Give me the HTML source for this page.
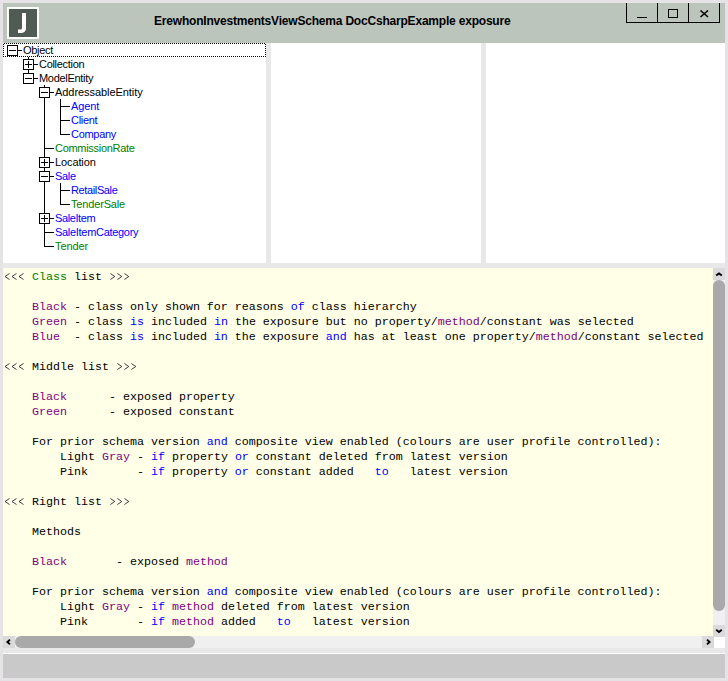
<!DOCTYPE html>
<html><head><meta charset="utf-8">
<style>
*{margin:0;padding:0;box-sizing:border-box}
html,body{width:728px;height:681px;overflow:hidden;background:#e5e3e5}
.a{position:absolute}
#title{left:3px;top:3px;width:722px;height:40px;background:#bcc5bc}
#icon{left:7px;top:7px;width:32px;height:32px;border:2px solid #fff;background:#505b53}
#ttext{left:154px;top:13px;font:bold 12px "Liberation Sans",sans-serif;letter-spacing:-0.2px;color:#000;white-space:nowrap;line-height:16px}
.panel{background:#fff;top:43px;height:220px}
#text{left:3px;top:268px;width:710px;height:368px;background:#ffffe8;overflow:hidden}
pre{position:absolute;left:1px;top:2px;font:11.67px "Liberation Mono",monospace;letter-spacing:0px;line-height:15px;color:#000}
.ab{display:inline-block;width:7px;text-align:center;font-family:"Liberation Serif",serif;font-size:13px;line-height:10px}
.p{color:#800080}.g{color:#008000}.b{color:#0000ff}
#vs{left:713px;top:268px;width:12px;height:368px;background:#f0f0f0}
#hs{left:3px;top:636px;width:710px;height:12px;background:#f0f0f0}
#corner{left:714px;top:637px;width:11px;height:11px;background:#fff}
#status{left:3px;top:654px;width:722px;height:24px;background:#c9c9c9}
#sline{left:3px;top:653px;width:722px;height:1px;background:#fff}
.tr{position:absolute;font:11px "Liberation Sans",sans-serif;letter-spacing:-0.3px;line-height:14px;height:14px;white-space:nowrap;color:#000}
</style></head><body>
<div class="a" style="left:3px;top:43px;width:722px;height:610px;background:#e8e8e8"></div>
<div id="title" class="a"></div>
<div id="icon" class="a"></div>
<svg class="a" style="left:0;top:0" width="48" height="45">
<path d="M22 13H26V28C26 31.5 24 33 20.5 33H18V29.5H20C21.5 29.5 22 29 22 27.5Z" fill="#fff"/>
</svg>
<div id="ttext" class="a">ErewhonInvestmentsViewSchema DocCsharpExample exposure</div>
<svg class="a" style="left:0;top:0" width="728" height="43" shape-rendering="crispEdges">
<path d="M626.5 3V22.5H719.5V3M657.5 3V22M688.5 3V22M637 17.5H647" stroke="#000" fill="none"/>
<rect x="668.5" y="9.5" width="9" height="8" stroke="#000" fill="none"/>
</svg>
<svg class="a" style="left:0;top:0" width="728" height="43">
<path d="M700.5 10.5L708 17M708 10.5L700.5 17" stroke="#000" stroke-width="1.65" fill="none"/>
</svg>

<div class="a panel" style="left:3px;width:263px"></div>
<div class="a panel" style="left:271px;width:210px"></div>
<div class="a panel" style="left:486px;width:239px"></div>

<!--TREE--><svg class="a" style="left:0;top:0" width="266" height="263" shape-rendering="crispEdges"><path d="M28.5 57V79M44.5 85V247M60.5 99V135M60.5 183V205M12 50.5H22M28 64.5H38M28 78.5H38M44 92.5H54M60 106.5H70M60 120.5H70M60 134.5H70M44 148.5H54M44 162.5H54M44 176.5H54M60 190.5H70M60 204.5H70M44 218.5H54M44 232.5H54M44 246.5H54" stroke="#000" fill="none"/><rect x="7.5" y="45.5" width="10" height="10" fill="#fff" stroke="#000"/><path d="M9 50.5H16" stroke="#000"/><rect x="23.5" y="59.5" width="10" height="10" fill="#fff" stroke="#000"/><path d="M25 64.5H32M28.5 61V68" stroke="#000"/><rect x="23.5" y="73.5" width="10" height="10" fill="#fff" stroke="#000"/><path d="M25 78.5H32" stroke="#000"/><rect x="39.5" y="87.5" width="10" height="10" fill="#fff" stroke="#000"/><path d="M41 92.5H48" stroke="#000"/><rect x="39.5" y="157.5" width="10" height="10" fill="#fff" stroke="#000"/><path d="M41 162.5H48M44.5 159V166" stroke="#000"/><rect x="39.5" y="171.5" width="10" height="10" fill="#fff" stroke="#000"/><path d="M41 176.5H48" stroke="#000"/><rect x="39.5" y="213.5" width="10" height="10" fill="#fff" stroke="#000"/><path d="M41 218.5H48M44.5 215V222" stroke="#000"/></svg>
<div class="tr" style="left:23px;top:43px;color:#000">Object</div>
<div class="tr" style="left:39px;top:57px;color:#000">Collection</div>
<div class="tr" style="left:39px;top:71px;color:#000">ModelEntity</div>
<div class="tr" style="left:55px;top:85px;color:#000;letter-spacing:-0.06px">AddressableEntity</div>
<div class="tr" style="left:71px;top:99px;color:#0000ff;letter-spacing:-0.1px">Agent</div>
<div class="tr" style="left:71px;top:113px;color:#0000ff">Client</div>
<div class="tr" style="left:71px;top:127px;color:#0000ff">Company</div>
<div class="tr" style="left:55px;top:141px;color:#008000">CommissionRate</div>
<div class="tr" style="left:55px;top:155px;color:#000;letter-spacing:-0.11px">Location</div>
<div class="tr" style="left:55px;top:169px;color:#0000ff">Sale</div>
<div class="tr" style="left:71px;top:183px;color:#0000ff;letter-spacing:-0.37px">RetailSale</div>
<div class="tr" style="left:71px;top:197px;color:#008000;letter-spacing:-0.16px">TenderSale</div>
<div class="tr" style="left:55px;top:211px;color:#0000ff;letter-spacing:-0.39px">SaleItem</div>
<div class="tr" style="left:55px;top:225px;color:#0000ff">SaleItemCategory</div>
<div class="tr" style="left:55px;top:239px;color:#008000;letter-spacing:-0.07px">Tender</div>
<svg class="a" style="left:0;top:0" width="270" height="60" shape-rendering="crispEdges"><path d="M4 43.5H266M3.5 44V57M3 56.5H266M265.5 44V57" stroke="#000" stroke-dasharray="1 1" fill="none"/></svg>
<!--/TREE-->
<div id="text" class="a"><pre>    <span class="g">Class</span> list    

    <span class="p">Black</span> - class only shown for reasons <span class="b">of</span> class hierarchy
    <span class="p">Green</span> - class <span class="b">is</span> included <span class="b">in</span> the exposure but no property/<span class="p">method</span>/constant was selected
    <span class="p">Blue</span>  - class <span class="b">is</span> included <span class="b">in</span> the exposure <span class="b">and</span> has at least one property/<span class="p">method</span>/constant selected

    Middle list    

    <span class="p">Black</span>      - exposed property
    <span class="p">Green</span>      - exposed constant

    For prior schema version <span class="b">and</span> composite view enabled (colours are user profile controlled):
        Light <span class="p">Gray</span> - <span class="b">if</span> property <span class="b">or</span> constant deleted from latest version
        Pink       - <span class="b">if</span> property <span class="b">or</span> constant added   <span class="b">to</span>   latest version

    Right list    

    Methods

    <span class="p">Black</span>       - exposed <span class="p">method</span>

    For prior schema version <span class="b">and</span> composite view enabled (colours are user profile controlled):
        Light <span class="p">Gray</span> - <span class="b">if</span> <span class="p">method</span> deleted from latest version
        Pink       - <span class="b">if</span> <span class="p">method</span> added   <span class="b">to</span>   latest version
</pre></div>
<svg class="a" style="left:0;top:0" width="728" height="681"><path d="M9.5 273.5L5 276.5L9.5 279.5M16.5 273.5L12 276.5L16.5 279.5M23.5 273.5L19 276.5L23.5 279.5M110.4 273.5L114.8 276.5L110.4 279.5M117.4 273.5L121.8 276.5L117.4 279.5M124.4 273.5L128.8 276.5L124.4 279.5M9.5 363.5L5 366.5L9.5 369.5M16.5 363.5L12 366.5L16.5 369.5M23.5 363.5L19 366.5L23.5 369.5M117.4 363.5L121.8 366.5L117.4 369.5M124.4 363.5L128.8 366.5L124.4 369.5M131.4 363.5L135.8 366.5L131.4 369.5M9.5 498.5L5 501.5L9.5 504.5M16.5 498.5L12 501.5L16.5 504.5M23.5 498.5L19 501.5L23.5 504.5M110.4 498.5L114.8 501.5L110.4 504.5M117.4 498.5L121.8 501.5L117.4 504.5M124.4 498.5L128.8 501.5L124.4 504.5" stroke="#1a1a2a" stroke-width="0.85" fill="none"/></svg>
<div id="vs" class="a"></div>
<div id="hs" class="a"></div>
<div id="corner" class="a"></div>
<div class="a" style="left:713px;top:268px;width:12px;height:12px;background:#dadada"></div>
<div class="a" style="left:713px;top:625px;width:12px;height:12px;background:#dadada"></div>
<div class="a" style="left:3px;top:636px;width:12px;height:12px;background:#dadada"></div>
<div class="a" style="left:702px;top:636px;width:12px;height:12px;background:#dadada"></div>
<div class="a" style="left:713px;top:280px;width:12px;height:331px;background:#a9a9a9;border-radius:6px"></div>
<div class="a" style="left:15px;top:636px;width:180px;height:12px;background:#a9a9a9;border-radius:6px"></div>
<svg class="a" style="left:0;top:0" width="728" height="681">
<path d="M716.2 275.6L719 273.4L721.8 275.6M716.2 629.8L719 632L721.8 629.8M707 639.6L709.6 642L707 644.4M10 639.6L7.4 642L10 644.4" stroke="#000" stroke-width="1.9" fill="none"/>
</svg>
<div id="sline" class="a"></div>
<div id="status" class="a"></div>
</body></html>
